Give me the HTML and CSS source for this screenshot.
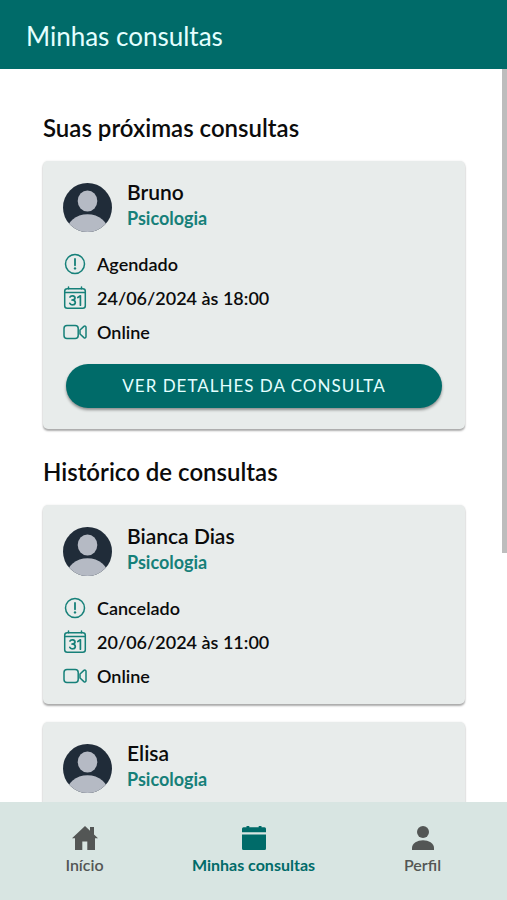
FILE: index.html
```html
<!DOCTYPE html>
<html lang="pt-BR">
<head>
<meta charset="utf-8">
<meta name="viewport" content="width=device-width, initial-scale=1">
<title>Minhas consultas</title>
<link rel="stylesheet" href="styles.css">
</head>
<body>
<svg class="sprite" aria-hidden="true">
  <symbol id="avatar" viewBox="0 0 49 49">
    <clipPath id="round"><circle cx="24.500" cy="24.500" r="24.500"/></clipPath>
    <g clip-path="url(#round)">
      <rect width="49" height="49" fill="#202c39"/>
      <ellipse cx="24.500" cy="18" rx="9.800" ry="10.500" fill="#b5bac4"/>
      <ellipse cx="24.500" cy="49" rx="21" ry="17.800" fill="#b5bac4"/>
    </g>
  </symbol>
  <symbol id="status" viewBox="0 0 24 24">
    <g fill="none" stroke="currentColor" stroke-width="1.500" stroke-linecap="round">
      <circle cx="12" cy="12" r="9.500"/>
      <path stroke-width="1.800" d="M12 7v6.300"/>
    </g>
    <circle cx="12" cy="16.400" r="1.200" fill="currentColor"/>
  </symbol>
  <symbol id="date" viewBox="0 0 24 24">
    <g fill="none" stroke="currentColor" stroke-width="1.500" stroke-linecap="round" stroke-linejoin="round">
      <rect x="1.700" y="2.700" width="20.600" height="19.600" rx="2.500"/>
      <path d="M1.700 6.500h20.600M5.500 1v1.700M18.500 1v1.700"/>
      <path stroke-width="1.700" d="M7 11c.7-1.700 5-1.600 5 1 0 1.600-1.600 2-3 2 1.500 0 3.300.5 3.300 2.400 0 3-4.800 3-5.500.9M14.800 11.500l2.600-1.700v9.400"/>
    </g>
  </symbol>
  <symbol id="video" viewBox="0 0 24 24">
    <g fill="none" stroke="currentColor" stroke-width="1.500" stroke-linejoin="round">
      <rect x="1" y="5.500" width="14.200" height="13" rx="3"/>
      <path d="M17 10l3.900-3.600c.9-.7 2.100-.2 2.100.9v9.400c0 1.100-1.200 1.600-2.100.9L17 14z"/>
    </g>
  </symbol>
</svg>

<div class="app">
  <header class="topbar"><h1>Minhas consultas</h1></header>

  <div class="viewport">
    <main class="content">
      <section>
        <h2>Suas próximas consultas</h2>
        <div class="cards">
          <article class="card">
            <div class="person">
              <svg class="avatar" aria-hidden="true"><use href="#avatar"/></svg>
              <div><h3>Bruno</h3><p class="area">Psicologia</p></div>
            </div>
            <ul class="details">
              <li><svg aria-hidden="true"><use href="#status"/></svg>Agendado</li>
              <li><svg aria-hidden="true"><use href="#date"/></svg>24/06/2024 às 18:00</li>
              <li><svg aria-hidden="true"><use href="#video"/></svg>Online</li>
            </ul>
            <button class="action" type="button">VER DETALHES DA CONSULTA</button>
          </article>
        </div>
      </section>

      <section>
        <h2>Histórico de consultas</h2>
        <div class="cards">
          <article class="card">
            <div class="person">
              <svg class="avatar" aria-hidden="true"><use href="#avatar"/></svg>
              <div><h3>Bianca Dias</h3><p class="area">Psicologia</p></div>
            </div>
            <ul class="details">
              <li><svg aria-hidden="true"><use href="#status"/></svg>Cancelado</li>
              <li><svg aria-hidden="true"><use href="#date"/></svg>20/06/2024 às 11:00</li>
              <li><svg aria-hidden="true"><use href="#video"/></svg>Online</li>
            </ul>
          </article>
          <article class="card">
            <div class="person">
              <svg class="avatar" aria-hidden="true"><use href="#avatar"/></svg>
              <div><h3>Elisa</h3><p class="area">Psicologia</p></div>
            </div>
          </article>
        </div>
      </section>
    </main>
    <div class="thumb" aria-hidden="true"></div>
  </div>

  <nav class="tabs">
    <a href="#inicio">
      <svg viewBox="0 0 28 28" aria-hidden="true"><path fill="currentColor" d="M14 2L1 14.200h3V26h7.300v-8.500h5V26H24V14.200h3l-4-3.700V3h-4v3.700z"/></svg>
      Início
    </a>
    <a href="#consultas" class="active" aria-current="page">
      <svg viewBox="0 0 28 28" aria-hidden="true"><path fill="currentColor" d="M3.500 3.300H6.500V2h2.800v1.300h9.400V2h2.800v1.300h3q1.500 0 1.500 1.500V8.300H2V4.800q0-1.500 1.500-1.500zM2 10.500h24v14q0 1.500-1.500 1.500h-21Q2 26 2 24.500z"/></svg>
      Minhas consultas
    </a>
    <a href="#perfil">
      <svg viewBox="0 0 28 28" aria-hidden="true"><circle cx="14" cy="8" r="6" fill="currentColor"/><path fill="currentColor" d="M3 26v-2c0-5 5.500-7.800 11-7.800S25 19 25 24v2z"/></svg>
      Perfil
    </a>
  </nav>
</div>
</body>
</html>
```
FILE: styles.css
```css
* { box-sizing: border-box; }

body {
  margin: 0;
  background: #fff;
  color: #0b0b0b;
  font-family: Lato, sans-serif;
}

h1, h2, h3, p, ul { margin: 0; padding: 0; }

.sprite { position: absolute; width: 0; height: 0; }

.app {
  display: flex;
  flex-direction: column;
  height: 100vh;
}

.topbar {
  flex: none;
  padding: 20px 26px 17px;
  background: #006b69;
  color: #e4ffff;
}

h1 { font-size: 26px; line-height: 32px; font-weight: 400; }

.viewport {
  position: relative;
  flex: 1;
  min-height: 0;
}

.content {
  height: 100%;
  padding: 43px 42px 28px 43px;
  overflow-y: auto;
  scrollbar-width: none;
}

.thumb {
  position: absolute;
  top: 0;
  right: 0;
  width: 5px;
  height: 66%;
  background: #bdbdbd;
}

section + section { margin-top: 27px; }

h2 {
  margin-bottom: 17px;
  font-size: 24px;
  line-height: 32px;
  font-weight: 600;
}

.cards { display: grid; gap: 18px; }

.card {
  min-height: 199px;
  padding: 22px 20px 11px;
  border-radius: 5px;
  background: #e8eceb;
  box-shadow: 0 2px 2px rgba(0, 0, 0, .32), 0 0 2px rgba(0, 0, 0, .1);
}

.person { display: flex; gap: 15px; }

.avatar { flex: none; width: 49px; height: 49px; }

h3 {
  margin-top: -4px;
  font-size: 21px;
  line-height: 26px;
  font-weight: 600;
}

.area {
  color: #168079;
  font-size: 18px;
  line-height: 26px;
  font-weight: 700;
}

.details {
  margin-top: 15px;
  list-style: none;
}

.details li {
  display: flex;
  align-items: center;
  gap: 10px;
  font-size: 18px;
  line-height: 34px;
  font-weight: 600;
}

.details svg { width: 24px; height: 24px; color: #168079; }

.action {
  display: block;
  width: calc(100% - 6px);
  height: 44px;
  margin: 15px 3px 10px;
  padding: 0;
  border: 0;
  border-radius: 22px;
  background: #006b69;
  color: #e4ffff;
  font: 400 17px/44px Lato, sans-serif;
  letter-spacing: 1px;
  box-shadow: 0 2px 3px rgba(0, 0, 0, .4);
}

.tabs {
  display: grid;
  grid-template-columns: repeat(3, 1fr);
  flex: none;
  padding: 22px 0 24px;
  background: #d8e5e2;
}

.tabs a {
  display: flex;
  flex-direction: column;
  align-items: center;
  gap: 2px;
  color: #535655;
  font-size: 16px;
  line-height: 22px;
  font-weight: 600;
  text-decoration: none;
}

.tabs svg { width: 28px; height: 28px; }

.tabs .active { color: #006b69; font-weight: 700; }
```
